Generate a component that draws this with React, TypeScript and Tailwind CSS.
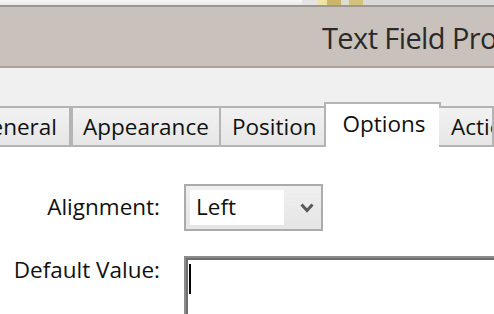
import React from 'react';

const font = { fontFamily: '"Open Sans", "Noto Sans", sans-serif' };

// Inactive tab in the property sheet strip
const Tab: React.FC<{ label: string; className?: string }> = ({ label, className = '' }) => (
  <div
    className={`h-[41px] shrink-0 flex items-center border-y-2 border-r-2 border-[#b4b4b4] bg-gradient-to-b from-[#f2f2f2] to-[#e6e6e6] text-[22.5px] text-[#111] whitespace-nowrap overflow-hidden ${className}`}
  >
    {label}
  </div>
);

export default function App() {
  return (
    <div className="w-[494px] h-[314px] overflow-hidden bg-[#f0f0f0] flex flex-col" style={font}>
      {/* Top strip of the window behind */}
      <div className="h-[5px] shrink-0 flex">
        <div className="w-[302px] bg-gradient-to-b from-[#f8f8f8] to-[#e8e8e8]" />
        <div className="w-[15px] bg-[#e4e4e4]" />
        <div className="w-[46px] flex">
          <div className="w-[10px] bg-[#efe3a6]" />
          <div className="w-[14px] bg-[#c9b66a]" />
          <div className="w-[8px] bg-[#dcdcd0]" />
          <div className="w-[14px] bg-[#d4c27a]" />
        </div>
        <div className="flex-1 bg-[#d8d8d8]" />
      </div>
      <div className="h-[2px] shrink-0 bg-[#9c9792]" />

      {/* Dialog title bar */}
      <div className="h-[59px] shrink-0 bg-[#c9c1bb] flex items-center pl-[322px] overflow-hidden whitespace-nowrap">
        <span className="text-[29px] tracking-[-0.6px] text-[#2a2a2a] leading-none pt-[1px]">Text Field Properties</span>
      </div>
      <div className="h-[2px] shrink-0 bg-[#aaa49f]" />

      {/* Tabs */}
      <div className="h-[34px] shrink-0" />
      <div className="flex items-end h-[45px] shrink-0">
        <Tab label="General" className="w-[71px] justify-end pr-[12px]" />
        <div className="w-[2px] h-[41px] bg-[#b4b4b4] shrink-0" />
        <Tab label="Appearance" className="w-[148px] pl-[10px]" />
        <Tab label="Position" className="w-[105px] pl-[11px]" />
        <div className="w-[117px] h-[45px] shrink-0 flex justify-center pl-[3px] pt-[3px] border-x-2 border-t-2 border-[#b4b4b4] bg-white text-[22.5px] text-[#111] -ml-[2px]">
          Options
        </div>
        <Tab label="Actions" className="flex-1 pl-[12px] -ml-[2px] border-l-0" />
      </div>

      {/* Options page */}
      <div className="flex-1 bg-white pt-[37px] grid grid-cols-[160px_1fr] gap-x-[24px] gap-y-[25px] content-start text-[22.5px] text-[#111]">
        <div className="self-center text-right leading-none -mt-[1px]">Alignment:</div>
        <div className="w-[139px] h-[47px] border-2 border-[#ababab] bg-gradient-to-b from-[#f0f0f0] to-[#e5e5e5] flex items-center p-[4px]">
          <div className="w-[94px] h-full bg-white flex items-center pl-[6px] leading-none">Left</div>
          <svg className="ml-[16px]" width="14" height="11" viewBox="0 0 14 11">
            <polyline points="1.5,2.5 7,8.5 12.5,2.5" fill="none" stroke="#5a5a5a" strokeWidth="3" />
          </svg>
        </div>

        <div className="text-right leading-none self-start pt-[3px]">Default Value:</div>
        <div className="h-[100px] border-t-2 border-l-2 border-[#8c8c8c] -mr-[40px]">
          <div className="h-full border-t-2 border-l-2 border-[#6e6e6e] bg-white pl-[1px] pt-[4px]">
            <div className="w-[2px] h-[30px] bg-black" />
          </div>
        </div>
      </div>
    </div>
  );
}
